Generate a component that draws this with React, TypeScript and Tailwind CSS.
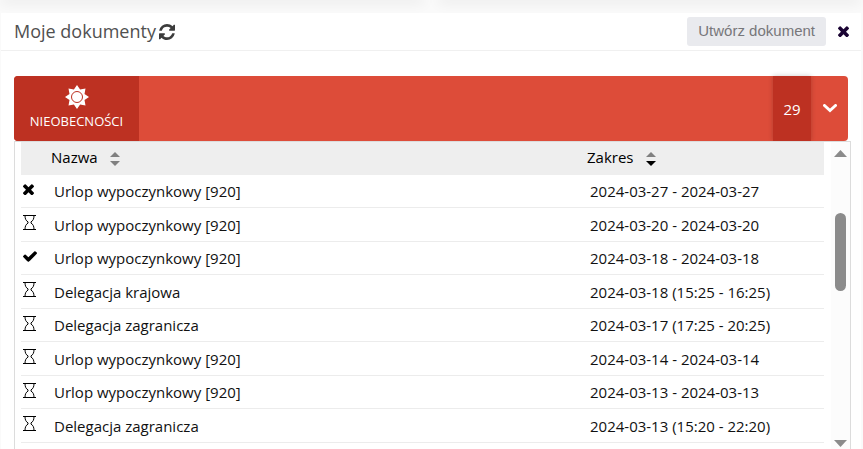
import { clsx } from "clsx";

type Status = "rejected" | "pending" | "accepted";

const rows: { status: Status; name: string; range: string }[] = [
	{ status: "rejected", name: "Urlop wypoczynkowy [920]", range: "2024-03-27 - 2024-03-27" },
	{ status: "pending", name: "Urlop wypoczynkowy [920]", range: "2024-03-20 - 2024-03-20" },
	{ status: "accepted", name: "Urlop wypoczynkowy [920]", range: "2024-03-18 - 2024-03-18" },
	{ status: "pending", name: "Delegacja krajowa", range: "2024-03-18 (15:25 - 16:25)" },
	{ status: "pending", name: "Delegacja zagranicza", range: "2024-03-17 (17:25 - 20:25)" },
	{ status: "pending", name: "Urlop wypoczynkowy [920]", range: "2024-03-14 - 2024-03-14" },
	{ status: "pending", name: "Urlop wypoczynkowy [920]", range: "2024-03-13 - 2024-03-13" },
	{ status: "pending", name: "Delegacja zagranicza", range: "2024-03-13 (15:20 - 22:20)" },
];

function RefreshIcon() {
	return (
		<svg viewBox="0 0 1536 1536" className="size-4" fill="currentColor">
			<path d="M1511 928q0 5-1 7-64 268-268 434.5t-478 166.5q-146 0-282.5-55t-243.5-157l-129 129q-19 19-45 19t-45-19-19-45v-448q0-26 19-45t45-19h448q26 0 45 19t19 45-19 45l-137 137q71 66 161 102t187 36q134 0 250-65t186-179q11-17 53-117 8-23 30-23h192q13 0 22.5 9.5t9.5 22.5zm25-800v448q0 26-19 45t-45 19h-448q-26 0-45-19t-19-45 19-45l138-138q-148-137-349-137-134 0-250 65t-186 179q-11 17-53 117-8 23-30 23h-199q-13 0-22.5-9.5t-9.5-22.5v-7q65-268 270-434.5t480-166.5q146 0 284 55.5t245 156.5l130-129q19-19 45-19t45 19 19 45z" />
		</svg>
	);
}

function CrossIcon() {
	return (
		<svg viewBox="302 334 1188 1188" className="size-[11px]" fill="currentColor">
			<path d="M1490 1322q0 40-28 68l-136 136q-28 28-68 28t-68-28l-294-294-294 294q-28 28-68 28t-68-28l-136-136q-28-28-28-68t28-68l294-294-294-294q-28-28-28-68t28-68l136-136q28-28 68-28t68 28l294 294 294-294q28-28 68-28t68 28l136 136q28 28 28 68t-28 68l-294 294 294 294q28 28 28 68z" />
		</svg>
	);
}

function CheckIcon() {
	return (
		<svg viewBox="121 334 1550 1188" className="h-[11px] w-[14px]" fill="currentColor">
			<path d="M1671 566q0 40-28 68l-724 724-136 136q-28 28-68 28t-68-28l-136-136-362-362q-28-28-28-68t28-68l136-136q28-28 68-28t68 28l294 295 656-657q28-28 68-28t68 28l136 136q28 28 28 68z" />
		</svg>
	);
}

function HourglassIcon() {
	return (
		<svg viewBox="0 0 13 15" className="h-[15px] w-[13px]" fill="none" stroke="currentColor">
			<path d="M0 .5h13M0 14.5h13" strokeWidth="1.2" />
			<path d="M2 .5c0 3.5 1 5.200 3 6.400v1.200C3 9.300 2 11 2 14.500M11 .5c0 3.500-1 5.200-3 6.400v1.200c2 1.200 3 2.900 3 6.400" />
		</svg>
	);
}

function SunIcon() {
	return (
		<svg viewBox="-12 -12 24 24" className="size-6">
			<path
				fill="#fff"
				d="M0-12 3.100-7.500 8.500-8.500 7.500-3.100 12 0 7.500 3.100 8.500 8.500 3.100 7.500 0 12-3.100 7.500-8.500 8.500-7.500 3.100-12 0-7.500-3.100-8.500-8.500-3.100-7.500Z"
			/>
			<circle r="5.500" fill="none" stroke="#bd3122" strokeWidth="1" />
		</svg>
	);
}

function SortIcon({ desc = false }: { desc?: boolean }) {
	return (
		<svg viewBox="0 0 10 14" className="mt-1 h-[14px] w-[10px]">
			<path d="M5 0 10 5H0Z" fill="#808080" />
			<path d="M0 9h10L5 14Z" fill={desc ? "#000" : "#808080"} />
		</svg>
	);
}

function StatusIcon({ status }: { status: Status }) {
	if (status === "rejected") return <CrossIcon />;
	if (status === "accepted") return <CheckIcon />;
	return <HourglassIcon />;
}

function ScrollBar() {
	return (
		<div className="flex w-[19px] shrink-0 flex-col items-center bg-[#fcfcfc] pt-2 pb-0.5">
			<svg viewBox="0 0 13 7" className="h-[7px] w-[13px]" fill="#8b8b8b">
				<path d="M6.500 0 13 7H0Z" />
			</svg>
			<div className="flex-1 pt-14">
				<div className="h-[78px] w-[11px] rounded-full bg-[#8b8b8b]" />
			</div>
			<svg viewBox="0 0 13 7" className="h-[7px] w-[13px]" fill="#8b8b8b">
				<path d="M0 0h13L6.500 7Z" />
			</svg>
		</div>
	);
}

export default function App() {
	return (
		<div className="flex h-screen flex-col overflow-hidden bg-[#fafafa] pr-0.5 pl-px font-['Open_Sans','Noto_Sans',sans-serif] text-black">
			{/* Bottom edge of the widgets above */}
			<div className="flex h-[13px] shrink-0 gap-[14px]">
				<div className="-mt-1 h-1 flex-1 bg-white shadow-[0_1px_14px_rgba(0,0,0,0.14)]" />
				<div className="-mt-1 h-1 flex-1 bg-white shadow-[0_1px_14px_rgba(0,0,0,0.14)]" />
			</div>

			<section className="z-10 flex min-h-0 flex-1 flex-col bg-white">
				<header className="flex h-[38px] shrink-0 items-center border-b border-[#f0f0f0] pr-3 pl-[13px]">
					<h2 className="pb-0.5 text-[18px] leading-6 text-[#505050]">Moje dokumenty</h2>
					<button type="button" aria-label="Odśwież" className="ml-[3px] text-[#3c3c3c]">
						<RefreshIcon />
					</button>
					<button
						type="button"
						className="ml-auto h-[29px] rounded-[3px] bg-[#e9eaee] px-[11px] font-['Liberation_Sans',sans-serif] text-[15px] text-[#77777a]"
					>
						Utwórz dokument
					</button>
					<button type="button" aria-label="Zamknij" className="ml-3 text-[#1a0433]">
						<CrossIcon />
					</button>
				</header>

				<div className="flex min-h-0 flex-1 flex-col pt-[25px] pr-2.5 pl-[13px]">
					<div className="mr-[3px] flex h-[65px] shrink-0 rounded-[4px] bg-[#dd4c39] text-white">
						<button
							type="button"
							className="flex w-[125px] flex-col items-center rounded-l-[4px] bg-[#bd3122] pt-[9px] text-[13px] leading-6"
						>
							<SunIcon />
							NIEOBECNOŚCI
						</button>
						<div className="ml-auto flex w-[38px] items-center justify-center bg-[#bd3122] pt-0.5 text-[15px] shadow-[0_0_5px_rgba(0,0,0,0.2)]">
							29
						</div>
						<button type="button" aria-label="Rozwiń" className="flex w-[37px] items-center justify-center">
							<svg viewBox="0 0 14 9" className="h-[9px] w-[14px]" fill="none" stroke="#fff" strokeWidth="3">
								<path d="m1.500 1.500 5.500 5 5.500-5" strokeLinecap="round" />
							</svg>
						</button>
					</div>

					<div className="flex min-h-0 flex-1 border border-b-0 border-[#dcdcdc] pl-1.5">
						<div className="mr-[7px] min-w-0 flex-1 overflow-hidden">
							<table className="w-full table-fixed border-separate border-spacing-0 text-left text-[15px] leading-5">
								<colgroup>
									<col className="w-[30px]" />
									<col />
									<col className="w-[237px]" />
								</colgroup>
								<thead>
									<tr className="h-[33px] bg-[#eee]">
										<td className="p-0" />
										<th className="p-0 pb-1 font-normal">
											<span className="flex items-center gap-3">
												Nazwa
												<SortIcon />
											</span>
										</th>
										<th className="p-0 pb-1 font-normal" aria-sort="descending">
											<span className="flex items-center gap-3">
												Zakres
												<SortIcon desc />
											</span>
										</th>
									</tr>
								</thead>
								<tbody className="text-[#111] [&_td]:border-b [&_td]:border-[#ececec]">
									{rows.map((row, i) => (
										<tr key={row.range} className={clsx(i % 2 === 0 ? "h-[33px]" : "h-[34px]")}>
											<td className="p-0 pb-1 pl-0.5 text-black">
												<StatusIcon status={row.status} />
											</td>
											<td className="p-0 pl-[3px]">{row.name}</td>
											<td className="p-0 pl-[3px]">{row.range}</td>
										</tr>
									))}
								</tbody>
							</table>
						</div>
						<ScrollBar />
					</div>
				</div>
			</section>
		</div>
	);
}
